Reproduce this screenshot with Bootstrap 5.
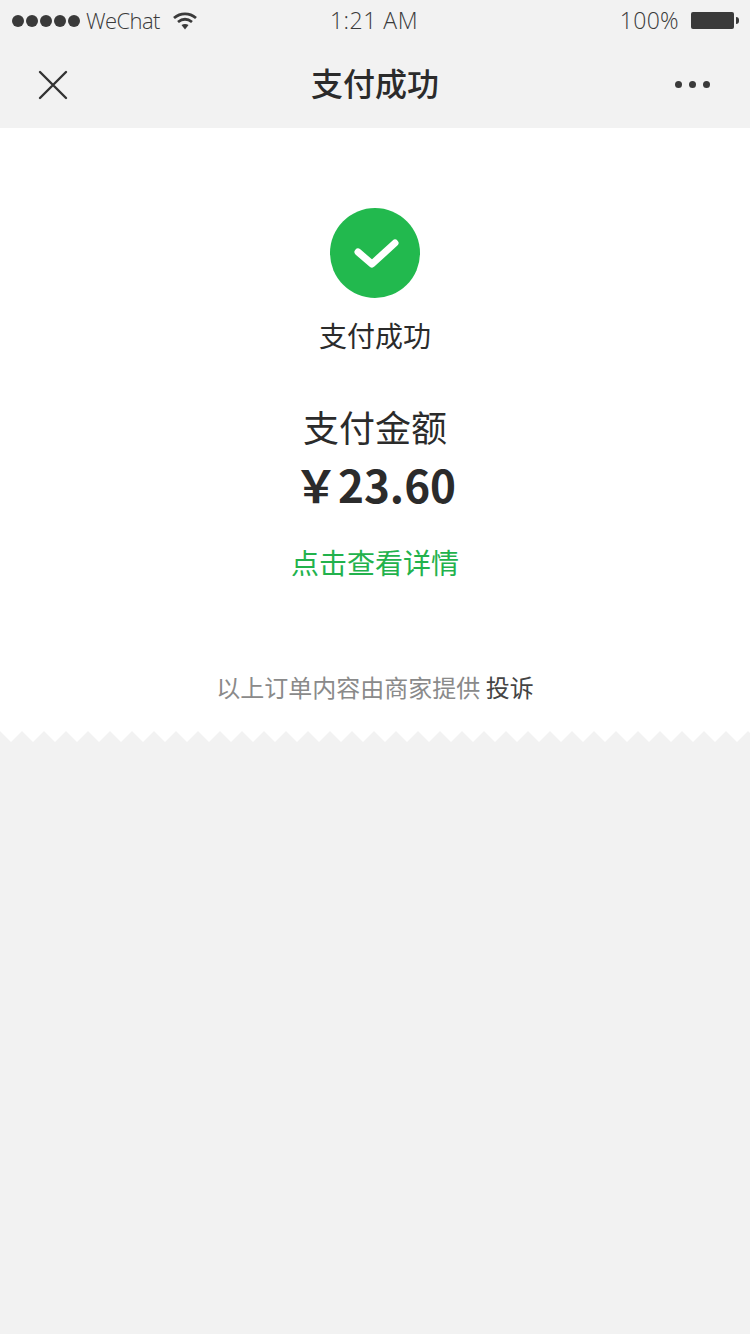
<!DOCTYPE html>
<html lang="zh">
<head>
<meta charset="utf-8">
<title>支付成功</title>
<link href="https://cdn.jsdelivr.net/npm/bootstrap@5.3.0/dist/css/bootstrap.min.css" rel="stylesheet">
<style>
html,body{height:100%}
body{background:#f2f2f2;font-family:"Noto Sans CJK SC","Noto Sans",sans-serif;color:#2b2b2b;width:750px;height:1334px;overflow:hidden}
.sbar{height:44px;padding:0 11px 3px 12px;color:#3a3a3a;font-family:"Open Sans","Noto Sans",sans-serif;font-size:22px;font-weight:300;letter-spacing:-.6px}
.sside{width:300px}
.sdots{gap:2px;margin-right:6px}
.sdot{width:12px;height:12px;border-radius:50%;background:#3a3a3a}
.sclock{font-size:23px;letter-spacing:.5px;margin-right:3px}
.spct{font-size:23px;letter-spacing:.3px;margin-right:12px}
.batt{width:43px;height:17px;background:#3a3a3a;border-radius:2px}
.battip{width:3px;height:7px;background:#3a3a3a;border-radius:0 4px 4px 0;margin-left:2px}
.wifi{margin-left:12px}
.tbar{height:84px;padding:0 40px 3px 38px}
.tbar-title{font-size:32px;font-weight:500;color:#2b2b2b;line-height:1;margin:0 0 5px 2px}
.tbar-side{width:80px}
.mdot{width:7px;height:7px;border-radius:50%;background:#3a3a3a}
.mdots{gap:7px;margin-bottom:1px}
.sheet{background:#fff;height:614px;padding-top:80px}
.okmark{width:90px;height:90px;display:block}
.oklabel{font-size:28px;line-height:40px;margin-top:17px;color:#2b2b2b}
.paylabel{font-size:36px;line-height:50px;margin-top:46px;color:#2b2b2b;font-weight:400}
.payamt{font-size:44px;line-height:64px;margin-top:1px;font-weight:700;color:#2b2b2b;font-family:"Noto Sans CJK SC",sans-serif}
.detail{font-size:28px;line-height:40px;margin-top:26px;color:#22b24c}
.note{font-size:24px;line-height:34px;margin-top:88px;color:#8a8a8a}
.note span{color:#444}
.zig{display:block;width:750px;height:11px;margin-top:-11px}
</style>
</head>
<body>
<div class="d-flex align-items-center justify-content-between sbar">
  <div class="d-flex align-items-center sside">
    <div class="d-flex sdots">
      <i class="sdot"></i><i class="sdot"></i><i class="sdot"></i><i class="sdot"></i><i class="sdot"></i>
    </div>
    <span>WeChat</span>
    <svg class="wifi" width="26" height="20" viewBox="0 0 26 20"><path d="M2 7C8.500 1.500 17.500 1.500 24 7M6 11C10.500 7.500 15.500 7.500 20 11" fill="none" stroke="#3a3a3a" stroke-width="2.800"/><path d="M9.500 14C11.500 12.700 14.500 12.700 16.500 14L13 18.500Z" fill="#3a3a3a"/></svg>
  </div>
  <div class="sclock">1:21 AM</div>
  <div class="d-flex align-items-center justify-content-end sside">
    <span class="spct">100%</span>
    <i class="batt"></i><i class="battip"></i>
  </div>
</div>
<div class="d-flex align-items-center justify-content-between tbar">
  <div class="tbar-side">
    <svg class="d-block" width="30" height="30" viewBox="0 0 30 30"><path d="M2 2L28 28M28 2L2 28" stroke="#333" stroke-width="2.400" stroke-linecap="round"/></svg>
  </div>
  <div class="tbar-title">支付成功</div>
  <div class="tbar-side d-flex justify-content-end">
    <div class="d-flex mdots"><i class="mdot"></i><i class="mdot"></i><i class="mdot"></i></div>
  </div>
</div>
<div class="sheet d-flex flex-column align-items-center text-center">
  <svg class="okmark" viewBox="0 0 90 90"><circle cx="45" cy="45" r="45" fill="#22b94e"/><path d="M28 44L42 56L65 35" fill="none" stroke="#fff" stroke-width="7" stroke-linecap="round" stroke-linejoin="round"/></svg>
  <div class="oklabel">支付成功</div>
  <div class="paylabel">支付金额</div>
  <div class="payamt">￥23.60</div>
  <div class="detail">点击查看详情</div>
  <div class="note">以上订单内容由商家提供 <span>投诉</span></div>
</div>
<svg class="zig" viewBox="0 0 750 11" preserveAspectRatio="none">
  <defs><pattern id="teeth" width="22" height="11" patternUnits="userSpaceOnUse"><path d="M0 0L11 11L22 0Z" fill="#fff"/><path d="M0 0L11 11L22 0V11H0Z" fill="#f2f2f2"/></pattern></defs>
  <rect width="750" height="11" fill="url(#teeth)"/>
</svg>
</body>
</html>
